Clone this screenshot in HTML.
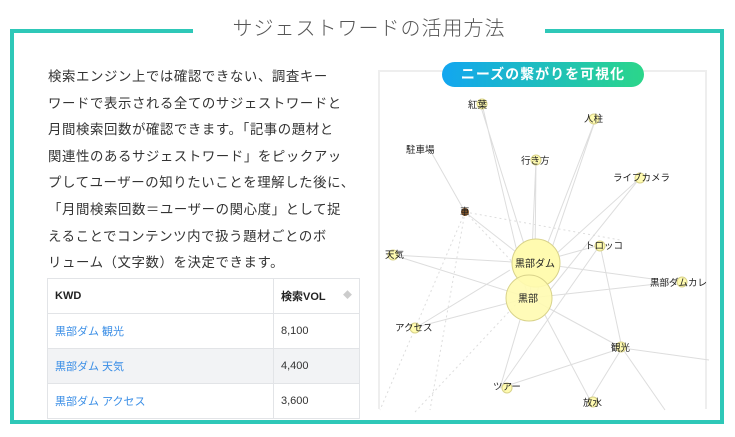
<!DOCTYPE html>
<html><head><meta charset="utf-8"><style>
body{margin:0;width:735px;height:437px;background:#fff;font-family:"Liberation Sans","Noto Sans CJK JP",sans-serif;position:relative;overflow:hidden}
.frame{position:absolute;left:10px;top:29px;width:706px;height:387px;border:4px solid #2ec8b8}
.title{position:absolute;left:193px;top:12px;width:352px;height:36px;background:#fff;text-align:center;font-size:20px;color:#555;line-height:34px;letter-spacing:1px;white-space:nowrap;font-weight:300}
.p{position:absolute;left:48px;top:64px;width:330px;font-size:13.4px;line-height:26.6px;color:#333;letter-spacing:0.6px;white-space:nowrap}
table{position:absolute;left:47px;top:278px;width:313px;border-collapse:collapse;font-size:11px}
td{border:1px solid #e2e4e7;height:34px;padding:0 7px;color:#333}
th{border:1px solid #e2e4e7;height:34px;padding:0 7px;text-align:left;font-size:11px;color:#222}
td a{color:#3a8ee6}
.g{position:absolute;left:378px;top:70px;width:329px;height:339px;border:2px solid #eee;border-bottom:none;box-sizing:border-box}
.pill{position:absolute;left:442px;top:62px;width:202px;height:25px;border-radius:13px;background:linear-gradient(90deg,#12a6f0,#2bd68a);color:#fff;font-weight:bold;font-size:14px;text-align:center;line-height:25px;letter-spacing:1px}
</style></head><body>
<div class="frame"></div>
<div class="title">サジェストワードの活用方法</div>
<div class="p">検索エンジン上では確認できない、調査キー<br>ワードで表示される全てのサジェストワードと<br>月間検索回数が確認できます。「記事の題材と<br>関連性のあるサジェストワード」をピックアッ<br>プしてユーザーの知りたいことを理解した後に、<br>「月間検索回数＝ユーザーの関心度」として捉<br>えることでコンテンツ内で扱う題材ごとのボ<br>リューム（文字数）を決定できます。</div>
<table>
<tr><th style="width:211px">KWD</th><th>検索VOL <span style="float:right;color:#ccc;font-size:9px">◆</span></th></tr>
<tr><td><a>黒部ダム 観光</a></td><td>8,100</td></tr>
<tr style="background:#f2f3f5"><td><a>黒部ダム 天気</a></td><td>4,400</td></tr>
<tr><td><a>黒部ダム アクセス</a></td><td>3,600</td></tr>
</table>
<div class="g"></div>
<svg style="position:absolute;left:0;top:0" width="735" height="437" font-size="9.5" font-family="Liberation Sans,Noto Sans CJK JP,sans-serif">
<g stroke="#ddd" stroke-width="1" fill="none">
<path d="M480 104L530 263M482 104L528 298M596 118L540 263M596 118L535 298M536 160L535 263M536 160L530 298M640 178L555 255M640 178L550 290M465 212L530 263M430 150L465 212M393 255L530 263M393 255L530 298M417 327L510 270M417 327L520 300M600 245L535 263M600 245L500 388M600 245L622 348M675 282L535 263M675 282L530 298M622 348L530 298M622 348L500 388M622 348L590 400M622 348L709 360M622 348L665 410M500 388L520 320M590 400L545 315"/>
<path d="M465 212L380 410M465 212L430 410M465 212L520 270M465 212L620 240M415 412L520 300" stroke-dasharray="2 3"/>
</g>
<g fill="#fffbb0" stroke="#d8d28a">
<circle cx="482" cy="104" r="5"/><circle cx="594" cy="119" r="5"/><circle cx="536" cy="160" r="5"/><circle cx="640" cy="178" r="5"/><circle cx="600" cy="246" r="5"/><circle cx="393" cy="255" r="5"/><circle cx="682" cy="282" r="5"/><circle cx="415" cy="328" r="5"/><circle cx="621" cy="347" r="5"/><circle cx="507" cy="388" r="5"/><circle cx="593" cy="402" r="5"/>
<circle cx="536" cy="263" r="24"/><circle cx="529" cy="298" r="23" fill-opacity="0.9"/>
</g>
<circle cx="465" cy="212" r="4" fill="#8b5a2b"/>
<g fill="#222">
<text x="468" y="108">紅葉</text><text x="584" y="122">人柱</text><text x="406" y="153">駐車場</text><text x="521" y="164">行き方</text><text x="613" y="181">ライブカメラ</text>
<text x="460" y="215">車</text><text x="585" y="249">トロッコ</text><text x="385" y="258">天気</text><text x="650" y="286">黒部ダムカレ</text>
<text x="395" y="331">アクセス</text><text x="611" y="351">観光</text><text x="493" y="390">ツアー</text><text x="583" y="406">放水</text>
<text x="515" y="267" font-size="10">黒部ダム</text><text x="518" y="302" font-size="10">黒部</text>
</g>
</svg>
<div class="pill">ニーズの繋がりを可視化</div>
</body></html>
